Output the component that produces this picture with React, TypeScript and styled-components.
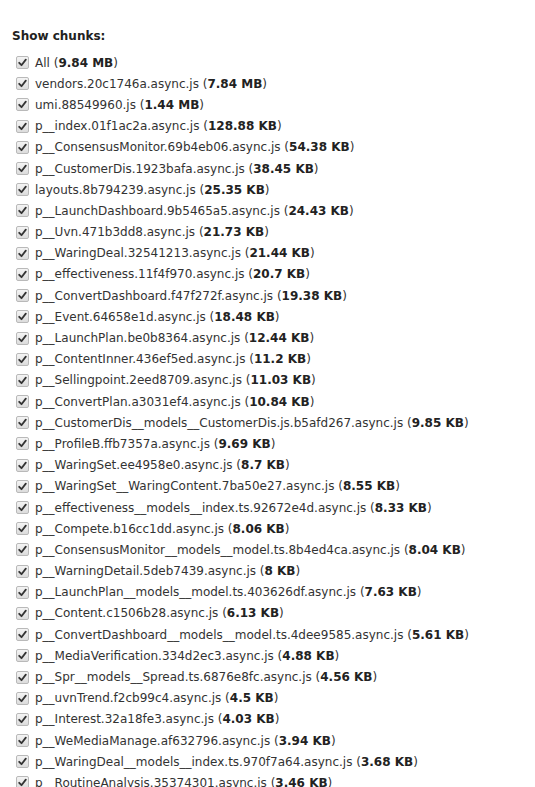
import React from "react";
import styled, { createGlobalStyle } from "styled-components";

const GlobalStyle = createGlobalStyle`
    html, body {
        margin: 0;
        padding: 0;
        background: #fff;
    }
    body {
        font-family: "DejaVu Sans", Verdana, sans-serif;
        font-size: 12px;
        color: #333;
    }
`;

const chunks: [string, string][] = [
    ["All", "9.84 MB"],
    ["vendors.20c1746a.async.js", "7.84 MB"],
    ["umi.88549960.js", "1.44 MB"],
    ["p__index.01f1ac2a.async.js", "128.88 KB"],
    ["p__ConsensusMonitor.69b4eb06.async.js", "54.38 KB"],
    ["p__CustomerDis.1923bafa.async.js", "38.45 KB"],
    ["layouts.8b794239.async.js", "25.35 KB"],
    ["p__LaunchDashboard.9b5465a5.async.js", "24.43 KB"],
    ["p__Uvn.471b3dd8.async.js", "21.73 KB"],
    ["p__WaringDeal.32541213.async.js", "21.44 KB"],
    ["p__effectiveness.11f4f970.async.js", "20.7 KB"],
    ["p__ConvertDashboard.f47f272f.async.js", "19.38 KB"],
    ["p__Event.64658e1d.async.js", "18.48 KB"],
    ["p__LaunchPlan.be0b8364.async.js", "12.44 KB"],
    ["p__ContentInner.436ef5ed.async.js", "11.2 KB"],
    ["p__Sellingpoint.2eed8709.async.js", "11.03 KB"],
    ["p__ConvertPlan.a3031ef4.async.js", "10.84 KB"],
    ["p__CustomerDis__models__CustomerDis.js.b5afd267.async.js", "9.85 KB"],
    ["p__ProfileB.ffb7357a.async.js", "9.69 KB"],
    ["p__WaringSet.ee4958e0.async.js", "8.7 KB"],
    ["p__WaringSet__WaringContent.7ba50e27.async.js", "8.55 KB"],
    ["p__effectiveness__models__index.ts.92672e4d.async.js", "8.33 KB"],
    ["p__Compete.b16cc1dd.async.js", "8.06 KB"],
    ["p__ConsensusMonitor__models__model.ts.8b4ed4ca.async.js", "8.04 KB"],
    ["p__WarningDetail.5deb7439.async.js", "8 KB"],
    ["p__LaunchPlan__models__model.ts.403626df.async.js", "7.63 KB"],
    ["p__Content.c1506b28.async.js", "6.13 KB"],
    ["p__ConvertDashboard__models__model.ts.4dee9585.async.js", "5.61 KB"],
    ["p__MediaVerification.334d2ec3.async.js", "4.88 KB"],
    ["p__Spr__models__Spread.ts.6876e8fc.async.js", "4.56 KB"],
    ["p__uvnTrend.f2cb99c4.async.js", "4.5 KB"],
    ["p__Interest.32a18fe3.async.js", "4.03 KB"],
    ["p__WeMediaManage.af632796.async.js", "3.94 KB"],
    ["p__WaringDeal__models__index.ts.970f7a64.async.js", "3.68 KB"],
    ["p__RoutineAnalysis.35374301.async.js", "3.46 KB"],
];

const Sidebar = styled.div`
    padding: 29px 12px 0 12px;
    height: 787px;
    overflow: hidden;
    box-sizing: border-box;
`;

const Heading = styled.div`
    font-weight: bold;
    font-size: 12px;
    color: #222;
    margin-bottom: 9px;
`;

const List = styled.div`
    display: flex;
    flex-direction: column;
`;

const Row = styled.label`
    display: flex;
    align-items: center;
    height: 21.2px;
    padding-left: 4px;
    white-space: nowrap;
`;

const Box = styled.span`
    display: inline-flex;
    align-items: center;
    justify-content: center;
    width: 11px;
    height: 11px;
    border: 1px solid #b9b9b9;
    border-radius: 2px;
    background: linear-gradient(#f4f4f4, #dcdcdc);
    margin-right: 6px;
    flex: none;
`;

const Name = styled.span`
    color: #333;
`;

const Size = styled.b`
    color: #222;
`;

const Check: React.FC = () => (
    <Box>
        <svg width="9" height="9" viewBox="0 0 9 9">
            <path d="M1.2 4.8 L3.5 7.2 L7.8 1.6" fill="none" stroke="#333" strokeWidth="1.8" strokeLinecap="round" strokeLinejoin="round" />
        </svg>
    </Box>
);

export default function App() {
    return (
        <>
            <GlobalStyle />
            <Sidebar>
                <Heading>Show chunks:</Heading>
                <List>
                    {chunks.map(([name, size]) => (
                        <Row key={name}>
                            <Check />
                            <Name>
                                {name} (<Size>{size}</Size>)
                            </Name>
                        </Row>
                    ))}
                </List>
            </Sidebar>
        </>
    );
}
